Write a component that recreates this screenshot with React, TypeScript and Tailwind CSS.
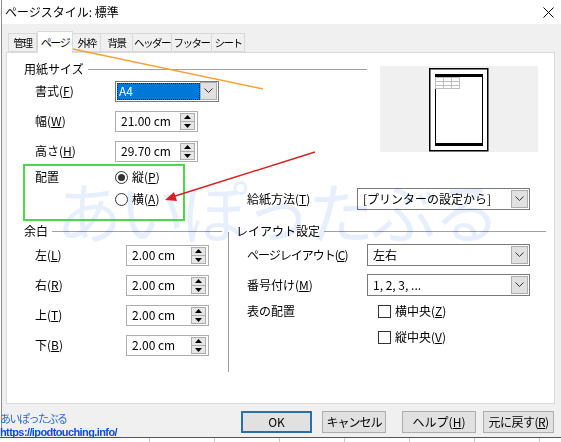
import React from "react";

const jp = { fontFamily: '"Noto Sans CJK JP", "Noto Sans", sans-serif' };

function U({ c }: { c: string }) {
  return <span className="underline underline-offset-[1px]">{c}</span>;
}

function Label({ text, k, w }: { text: string; k?: string; w: string }) {
  return (
    <span className={`${w} shrink-0 whitespace-nowrap`}>
      {text}
      {k && (
        <>
          (<U c={k} />)
        </>
      )}
    </span>
  );
}

function Chevron() {
  return (
    <svg width="9" height="6" viewBox="0 0 9 6">
      <path d="M0.5 0.5 L4.5 4.5 L8.5 0.5" fill="none" stroke="#333" strokeWidth="1" />
    </svg>
  );
}

function DropButton() {
  return (
    <div className="flex h-[18px] w-[17px] items-center justify-center border border-[#adadad] bg-[#e1e1e1]">
      <Chevron />
    </div>
  );
}

function Combo({ value, w }: { value: string; w: string }) {
  return (
    <div className={`${w} flex h-[22px] items-center border border-[#7a7a7a] bg-white pl-[5px] pr-[1px]`}>
      <span className="flex-1 whitespace-nowrap">{value}</span>
      <DropButton />
    </div>
  );
}

function Spin({ value, w = "w-[83px]" }: { value: string; w?: string }) {
  return (
    <div className={`${w} flex h-[21px] items-center border border-[#adadad] bg-white pl-[5px] pr-[2px]`}>
      <span className="flex-1 whitespace-nowrap">{value}</span>
      <div className="flex h-[17px] w-[15px] flex-col items-center justify-around border border-[#adadad] bg-[#e6e6e6]">
        <svg width="7" height="4" viewBox="0 0 7 4">
          <path d="M0 4 L3.5 0 L7 4 Z" fill="#000" />
        </svg>
        <div className="h-px w-full bg-[#adadad]" />
        <svg width="7" height="4" viewBox="0 0 7 4">
          <path d="M0 0 L3.5 4 L7 0 Z" fill="#000" />
        </svg>
      </div>
    </div>
  );
}

function GroupHeader({ title, pl, mr }: { title: string; pl: string; mr: string }) {
  return (
    <div className={`flex h-[14px] items-center ${pl} ${mr}`}>
      <span className="whitespace-nowrap">{title}</span>
      <div className="ml-[4px] h-px flex-1 bg-[#a0a0a0]" />
    </div>
  );
}

function Radio({ on, text, k }: { on?: boolean; text: string; k: string }) {
  return (
    <div className="flex items-center">
      <div className="flex h-[13px] w-[13px] items-center justify-center rounded-full border border-[#333] bg-white">
        {on && <div className="h-[7px] w-[7px] rounded-full bg-[#333]" />}
      </div>
      <span className="ml-[4px]">
        {text}(<U c={k} />)
      </span>
    </div>
  );
}

function Check({ text, k }: { text: string; k: string }) {
  return (
    <div className="ml-[11px] flex items-center">
      <div className="h-[13px] w-[13px] border border-[#333] bg-white" />
      <span className="ml-[4px]">
        {text}(<U c={k} />)
      </span>
    </div>
  );
}

function Preview() {
  return (
    <div className="ml-[13px] mt-[4px] flex h-[86px] w-[158px] justify-center bg-[#f0f0f0]">
      <svg width="60" height="84" viewBox="0 0 60 84" className="mt-[2px]">
        <rect x="0.75" y="0.75" width="58" height="82" fill="#fff" stroke="#000" strokeWidth="1.5" />
        <rect x="6.5" y="6.5" width="47" height="71" fill="none" stroke="#000" strokeWidth="1" />
        <rect x="6" y="6" width="48" height="3" fill="#000" />
        <rect x="6" y="75" width="48" height="3" fill="#000" />
        <g stroke="#bdbdbd" strokeWidth="1" fill="none">
          <rect x="6.5" y="9.5" width="24" height="11" />
          <line x1="14.5" y1="9.5" x2="14.5" y2="20.5" />
          <line x1="22.5" y1="9.5" x2="22.5" y2="20.5" />
          <line x1="6.5" y1="13.5" x2="30.5" y2="13.5" />
          <line x1="6.5" y1="17.5" x2="30.5" y2="17.5" />
        </g>
      </svg>
    </div>
  );
}

const tabs = ["管理", "ページ", "外枠", "背景", "ヘッダー", "フッター", "シート"];
const tabW = ["w-[29px]", "w-[36px]", "w-[28px]", "w-[32px]", "w-[39px]", "w-[40px]", "w-[33px]"];

export default function App() {
  return (
    <div className="relative h-[442px] w-[561px] overflow-hidden bg-white text-[12px] text-black" style={jp}>
      <div className="ml-[1px] flex h-[437px] flex-col border-l border-[#8c8c8c]">
        {/* title bar */}
        <div className="flex h-[24px] items-center justify-between bg-white pl-[3px] pr-[7px]">
          <span className="text-[12px]">ページスタイル: 標準</span>
          <svg width="11" height="11" viewBox="0 0 11 11">
            <path d="M0.5 0.5 L10.5 10.5 M10.5 0.5 L0.5 10.5" stroke="#000" strokeWidth="1" />
          </svg>
        </div>

        <div className="flex flex-1 flex-col bg-[#f0f0f0] pl-[4px] pr-[6px]">
          {/* tabs */}
          <div className="flex h-[28px] items-end pl-[2px] pt-[7px]">
            {tabs.map((t, i) =>
              i === 1 ? (
                <div
                  key={t}
                  className={`${tabW[i]} relative z-10 -mb-px flex h-[22px] items-center justify-center whitespace-nowrap border border-b-0 border-[#d9d9d9] bg-white text-[11px] tracking-[-1.5px]`}
                >
                  {t}
                </div>
              ) : (
                <div
                  key={t}
                  className={`${tabW[i]} flex h-[19px] items-center justify-center overflow-hidden whitespace-nowrap border border-[#d9d9d9] bg-[#f0f0f0] text-[10.5px] tracking-[-1.5px] ${i > 1 ? "border-l-0" : ""}`}
                >
                  {t}
                </div>
              )
            )}
          </div>

          {/* panel */}
          <div className="flex h-[352px] flex-col border border-[#d9d9d9] bg-white pt-[9px]">
            <div className="flex">
              <div className="flex w-[360px] flex-col">
                <GroupHeader title="用紙サイズ" pl="pl-[17px]" mr="mr-0" />
                <div className="flex h-[30px] items-center pl-[28px]">
                  <Label text="書式" k="F" w="w-[80px]" />
                  <div className="flex h-[21px] w-[104px] items-center border border-[#7a7a7a] bg-white pl-[1px] pr-[1px]">
                    <div className="flex h-[17px] flex-1 items-center border border-dotted border-[#222] bg-[#0078d7] pl-[1px] text-white">
                      A4
                    </div>
                    <DropButton />
                  </div>
                </div>
                <div className="flex h-[30px] items-center pl-[28px]">
                  <Label text="幅" k="W" w="w-[80px]" />
                  <Spin value="21.00 cm" />
                </div>
                <div className="flex h-[30px] items-center pl-[28px]">
                  <Label text="高さ" k="H" w="w-[80px]" />
                  <Spin value="29.70 cm" />
                </div>
              </div>
              <Preview />
            </div>

            <div className="flex h-[22px] items-center pl-[28px]">
              <Label text="配置" w="w-[80px]" />
              <Radio on text="縦" k="P" />
            </div>
            <div className="flex h-[22px] items-center pl-[28px]">
              <div className="w-[80px] shrink-0" />
              <div className="w-[132px] shrink-0">
                <Radio text="横" k="A" />
              </div>
              <Label text="給紙方法" k="T" w="w-[110px]" />
              <Combo value="[プリンターの設定から]" w="w-[173px]" />
            </div>

            {/* groups */}
            <div className="mt-[14px] flex">
              <div className="flex w-[221px] flex-col">
                <GroupHeader title="余白" pl="pl-[17px]" mr="mr-[6px]" />
                <div className="mt-[2px] flex flex-col">
                  {[
                    ["左", "L"],
                    ["右", "R"],
                    ["上", "T"],
                    ["下", "B"],
                  ].map(([t, k]) => (
                    <div key={t} className="flex h-[30px] items-center pl-[28px]">
                      <Label text={t} k={k} w="w-[91px]" />
                      <Spin value="2.00 cm" />
                    </div>
                  ))}
                </div>
              </div>
              <div className="mt-[8px] h-[140px] w-px bg-[#a0a0a0]" />
              <div className="flex flex-1 flex-col">
                <GroupHeader title="レイアウト設定" pl="pl-[7px]" mr="mr-[8px]" />
                <div className="mt-[2px] flex h-[30px] items-center pl-[18px]">
                  <span className="w-[120px] shrink-0 whitespace-nowrap tracking-[-1px]">
                    ページレイアウト(<U c="C" />)
                  </span>
                  <Combo value="左右" w="w-[163px]" />
                </div>
                <div className="flex h-[30px] items-center pl-[18px]">
                  <Label text="番号付け" k="M" w="w-[120px]" />
                  <Combo value="1, 2, 3, ..." w="w-[163px]" />
                </div>
                <div className="flex h-[22px] items-center pl-[18px]">
                  <Label text="表の配置" w="w-[120px]" />
                  <Check text="横中央" k="Z" />
                </div>
                <div className="flex h-[30px] items-center pl-[18px]">
                  <div className="w-[120px] shrink-0" />
                  <Check text="縦中央" k="V" />
                </div>
              </div>
            </div>
          </div>

          {/* buttons */}
          <div className="mt-[7px] flex h-[22px] items-center pl-[235px]">
            <button className="h-[22px] w-[71px] border-2 border-[#2b6ea8] bg-[#e1e1e1]">OK</button>
            <button className="ml-[10px] h-[22px] w-[64px] border border-[#adadad] bg-[#e1e1e1] tracking-[-1px]">
              キャンセル
            </button>
            <button className="ml-[16px] h-[22px] w-[74px] border border-[#adadad] bg-[#e1e1e1]">
              ヘルプ(<U c="H" />)
            </button>
            <button className="ml-[7px] h-[22px] w-[71px] border border-[#adadad] bg-[#e1e1e1] tracking-[-0.5px]">
              元に戻す(<U c="R" />)
            </button>
          </div>
        </div>
      </div>

      {/* spreadsheet behind */}
      <div className="flex h-[5px] border-t border-[#555] bg-white">
        {[150, 65, 65, 65, 65, 65, 65].map((w, i) => (
          <div key={i} className="h-full border-r border-[#c8c8c8]" style={{ width: w }} />
        ))}
      </div>

      {/* watermark */}
      <div className="pointer-events-none absolute left-[56px] top-[176px] whitespace-nowrap text-[66px] font-normal leading-none tracking-[-3px] text-[#e8effc] mix-blend-multiply">
        あいぽったぶる
      </div>

      {/* annotations */}
      <div className="pointer-events-none absolute left-[23px] top-[164px] h-[57px] w-[162px] border-2 border-[#4cd84c]" />
      <svg className="pointer-events-none absolute left-0 top-0" width="561" height="442">
        <line x1="263" y1="89" x2="68" y2="48" stroke="#f2a33a" strokeWidth="1.5" />
        <path d="M61 46 L73 43 L70 52 Z" fill="#f2a33a" />
        <line x1="315" y1="152" x2="172" y2="197" stroke="#d42222" strokeWidth="1.5" />
        <path d="M165 200 L174 192 L177 201 Z" fill="#d42222" />
      </svg>

      {/* site credit */}
      <div className="pointer-events-none absolute left-0 top-[413px] flex flex-col leading-none">
        <span className="text-[11px] tracking-[-1.5px] text-[#2a6bd0]">あいぽったぶる</span>
        <span
          className="mt-[3px] text-[11px] font-bold tracking-[-0.6px] text-[#0b4fe0] underline"
          style={{ fontFamily: '"Liberation Sans", sans-serif' }}
        >
          https://ipodtouching.info/
        </span>
      </div>
    </div>
  );
}
